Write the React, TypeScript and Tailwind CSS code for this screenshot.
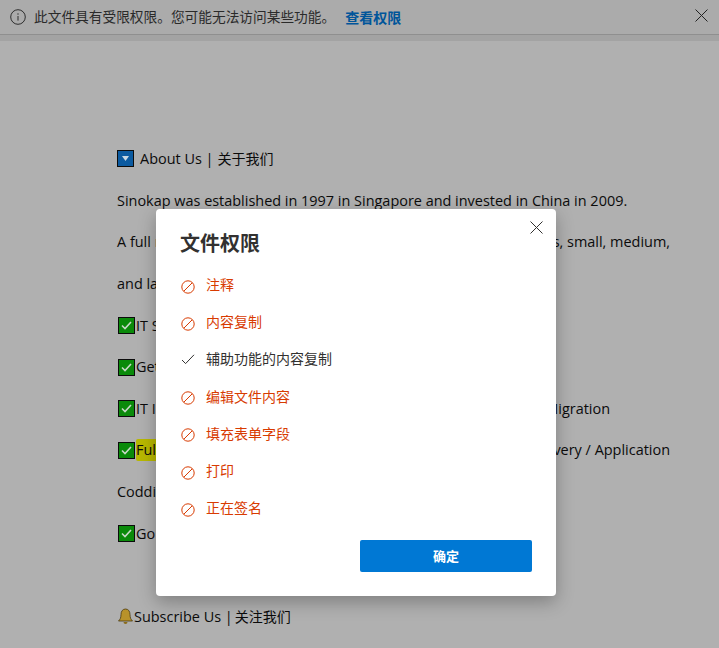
import React from "react";

const F = "[font-family:'Open_Sans','Noto_Sans_CJK_SC',sans-serif]";

function Check() {
  return (
    <svg width="17" height="17" viewBox="0 0 17 17" className="inline-block shrink-0 ml-[1px] mr-[1px]">
      <rect x="0.5" y="0.5" width="16" height="16" fill="#0a8a0a" stroke="#0c0c0c" />
      <path d="M4 8.5l3 3 6-6.5" fill="none" stroke="#c8d8c8" strokeWidth="1.6" />
    </svg>
  );
}

function Blocked() {
  return (
    <svg width="14" height="14" viewBox="0 0 14 14" className="shrink-0">
      <circle cx="7" cy="7" r="6.2" fill="none" stroke="#d83b01" strokeWidth="1" />
      <path d="M2.8 11.2L11.2 2.8" stroke="#d83b01" strokeWidth="1" />
    </svg>
  );
}

function PermRow({ label, ok }: { label: string; ok?: boolean }) {
  return (
    <div className={`flex items-center gap-[11px] h-[37.2px] text-[14px] ${ok ? "text-[#323130]" : "text-[#d83b01]"}`}>
      {ok ? (
        <svg width="14" height="14" viewBox="0 0 14 14" className="shrink-0 ml-[1px]">
          <path d="M1 8l3.6 3.6L13 2.8" fill="none" stroke="#323130" strokeWidth="1" />
        </svg>
      ) : (
        <span className="mt-[4px] ml-[1px] flex"><Blocked /></span>
      )}
      <span>{label}</span>
    </div>
  );
}

function Line({ children, w }: { children: React.ReactNode; w?: string }) {
  return <div className={`h-[41.65px] flex items-center whitespace-nowrap ${w ?? ""}`}>{children}</div>;
}

export default function App() {
  const perms = [
    { label: "注释" },
    { label: "内容复制" },
    { label: "辅助功能的内容复制", ok: true },
    { label: "编辑文件内容" },
    { label: "填充表单字段" },
    { label: "打印" },
    { label: "正在签名" },
  ];
  return (
    <div className={`relative w-[719px] h-[648px] overflow-hidden bg-[#b0b0b0] text-[#0b0b0b] ${F}`}>
      <div className="h-[35px] bg-[#ababab] border-b border-[#8f8f8f] flex items-center pl-[10px] pr-[11px] text-[13.7px] text-[#2a2a2a]">
        <svg width="16" height="16" viewBox="0 0 16 16" className="shrink-0">
          <circle cx="8" cy="8" r="7.3" fill="none" stroke="#2e2e2e" strokeWidth="1" />
          <rect x="7.5" y="7" width="1" height="4.6" fill="#2e2e2e" />
          <rect x="7.4" y="4.4" width="1.2" height="1.2" fill="#2e2e2e" />
        </svg>
        <span className="ml-[8px]">此文件具有受限权限。您可能无法访问某些功能。</span>
        <span className="ml-[10px] text-[14px] font-semibold text-[#00559a]">查看权限</span>
        <svg width="13" height="13" viewBox="0 0 13 13" className="ml-auto mb-[3px]">
          <path d="M.5.5l12 12M12.5.5l-12 12" stroke="#222" strokeWidth="1" />
        </svg>
      </div>
      <div className="h-[6px] bg-[#a3a3a3]" />

      <div className="pl-[117px] pt-[97px] text-[14.45px]">
        <Line>
          <span className="flex items-center gap-[6px]">
            <svg width="17" height="17" viewBox="0 0 17 17">
              <rect x="0.5" y="0.5" width="16" height="16" fill="#0b5aa0" stroke="#0c0c0c" />
              <path d="M5 6h7l-3.5 5z" fill="#c8d8e4" />
            </svg>
            <span>About Us |</span>
            <span className="text-[14px] ml-[-2px]">关于我们</span>
          </span>
        </Line>
        <Line>Sinokap was established in 1997 in Singapore and invested in China in 2009.</Line>
        <Line w="w-[553px] justify-between">
          <span>A full range of IT services</span>
          <span>for multinational enterprises, small, medium,</span>
        </Line>
        <Line>and large companies</Line>
        <Line><Check />IT Support</Line>
        <Line><Check />Get IT Services</Line>
        <Line w="w-[493px] justify-between">
          <span className="flex items-center"><Check />IT Infrastructure</span>
          <span>Office Relocation &amp; Data Center Migration</span>
        </Line>
        <Line w="w-[553px] justify-between">
          <span className="flex items-center">
            <Check />
            <span className="bg-[#b8b800] rounded-[2px]">Full Stack Software</span>
          </span>
          <span>Development / Cloud Delivery / Application</span>
        </Line>
        <Line>Codding</Line>
        <Line><Check />Go Digital</Line>
        <Line>&nbsp;</Line>
        <Line>
          <span className="flex items-center">
            <svg width="17" height="17" viewBox="0 0 17 17">
              <path d="M8.5 1C5.5 1 4 3.5 4 6.5 4 10 3 11.5 1.5 13h14C14 11.5 13 10 13 6.5 13 3.5 11.5 1 8.5 1z" fill="#b8922a" stroke="#4a3a10" strokeWidth=".8" />
              <path d="M6.5 14a2 2 0 004 0z" fill="#8a6c1c" />
            </svg>
            <span>Subscribe Us |</span>
            <span className="text-[14px] ml-[2px]">关注我们</span>
          </span>
        </Line>
      </div>

      <div className="absolute left-[156px] top-[209px] w-[400px] h-[387px] bg-white rounded-[4px] shadow-[0_6px_18px_rgba(0,0,0,0.28)] pl-[24px] pr-[24px] pt-[21px]">
        <svg width="13" height="13" viewBox="0 0 13 13" className="absolute right-[13.5px] top-[11.5px]">
          <path d="M.5.5l12 12M12.5.5l-12 12" stroke="#323130" strokeWidth="1" />
        </svg>
        <div className="text-[20px] leading-[28px] font-semibold text-[#323130]">文件权限</div>
        <div className="mt-[8px] flex flex-col">
          {perms.map((p) => (
            <PermRow key={p.label} label={p.label} ok={p.ok} />
          ))}
        </div>
        <div className="mt-[14px] flex justify-end">
          <button className="w-[172px] h-[32px] bg-[#0078d4] text-white text-[13px] font-semibold rounded-[2px]">确定</button>
        </div>
      </div>
    </div>
  );
}
